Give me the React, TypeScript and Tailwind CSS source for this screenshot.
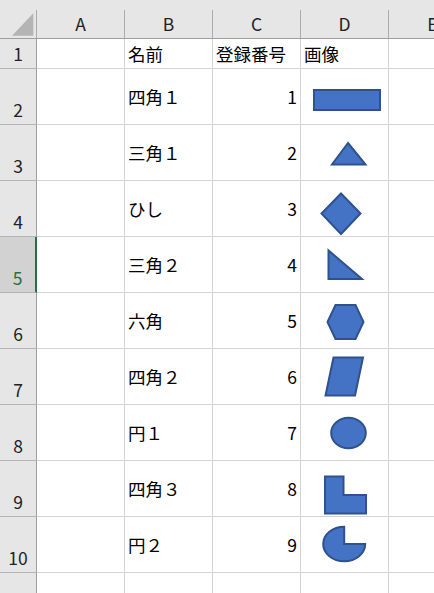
import React from "react";

const FILL = "#4472c4";
const STROKE = "#2f528f";

type Row = { name: string; num: string; shape: React.ReactNode };

function Shape({ children }: { children: React.ReactNode }) {
  return (
    <svg width="87" height="55" viewBox="0 0 87 55" className="block">
      <g fill={FILL} stroke={STROKE} strokeWidth={2} strokeLinejoin="miter">
        {children}
      </g>
    </svg>
  );
}

const rows: Row[] = [
  { name: "四角１", num: "1", shape: <rect x="13" y="21" width="66" height="20" /> },
  { name: "三角１", num: "2", shape: <polygon points="47,18 31,39.5 64.5,39.5" /> },
  { name: "ひし", num: "3", shape: <polygon points="40,12.5 20.5,32.5 40,53 59.5,32.5" /> },
  { name: "三角２", num: "4", shape: <polygon points="27.5,13.5 27.5,42 61,42" /> },
  {
    name: "六角",
    num: "5",
    shape: <polygon points="34.5,12 54.5,12 62.5,29 54.5,46 34.5,46 26.5,29" />,
  },
  { name: "四角２", num: "6", shape: <polygon points="32.5,8.5 62,8.5 54,46.5 24.5,46.5" /> },
  { name: "円１", num: "7", shape: <ellipse cx="47.5" cy="28" rx="17.3" ry="15.3" /> },
  {
    name: "四角３",
    num: "8",
    shape: <polygon points="24,15.5 42.5,15.5 42.5,34 65,34 65,52.5 24,52.5" />,
  },
  {
    name: "円２",
    num: "9",
    shape: <path d="M43.2 27 L43.2 9.7 A21 17.3 0 1 0 64.2 27 Z" />,
  },
];

const font = { fontFamily: '"Noto Sans CJK JP", "Noto Sans", sans-serif' };

function RowHead({ label, h, selected }: { label: string; h: string; selected?: boolean }) {
  return (
    <div
      className={`flex w-[37px] shrink-0 items-end justify-center border-b border-b-[#b4b4b4] pb-[4px] leading-[20px] ${h} ${
        selected
          ? "border-r-2 border-r-[#217346] bg-[#d2d2d2] text-[#217346]"
          : "border-r border-r-[#9e9e9e] bg-[#e6e6e6] text-[#222]"
      }`}
    >
      {label}
    </div>
  );
}

function Cell({ children, className = "" }: { children?: React.ReactNode; className?: string }) {
  return (
    <div
      className={`flex w-[88px] shrink-0 items-center border-r border-b border-[#d4d4d4] leading-[20px] ${className}`}
    >
      {children}
    </div>
  );
}

export default function App() {
  return (
    <div
      className="h-[593px] w-[434px] overflow-hidden bg-white text-[17.5px] text-black"
      style={font}
    >
      <div className="flex h-[39px] w-[520px] border-b border-[#9e9e9e] bg-[#e6e6e6] pt-[10px] leading-[20px] text-[#222]">
        <div className="relative w-[37px] shrink-0 border-r border-[#ababab]">
          <svg width="36" height="28" className="absolute left-0 top-0">
            <polygon points="12,25.7 33.3,25.7 33.3,3.3" fill="#b4b4b4" />
          </svg>
        </div>
        {["A", "B", "C", "D", "E"].map((c) => (
          <div
            key={c}
            className="flex w-[88px] shrink-0 items-center justify-center border-r border-[#ababab]"
          >
            {c}
          </div>
        ))}
      </div>

      <div className="flex h-[30px] w-[520px]">
        <RowHead label="1" h="h-[30px]" />
        <Cell />
        <Cell className="pl-[3px]">名前</Cell>
        <Cell className="pl-[3px]">登録番号</Cell>
        <Cell className="pl-[3px]">画像</Cell>
        <Cell />
      </div>

      {rows.map((r, i) => (
        <div key={r.num} className="flex h-[56px] w-[520px]">
          <RowHead label={String(i + 2)} h="h-[56px]" selected={i + 2 === 5} />
          <Cell />
          <Cell className="pl-[3px]">{r.name}</Cell>
          <Cell className="justify-end pr-[3px]">{r.num}</Cell>
          <Cell className="items-start">
            <Shape>{r.shape}</Shape>
          </Cell>
          <Cell />
        </div>
      ))}

      {/* row 11 is cut by the window edge; its number falls below it */}
      <div className="flex h-[56px] w-[520px]">
        <RowHead label="" h="h-[56px]" />
        <Cell />
        <Cell />
        <Cell />
        <Cell />
        <Cell />
      </div>
    </div>
  );
}
